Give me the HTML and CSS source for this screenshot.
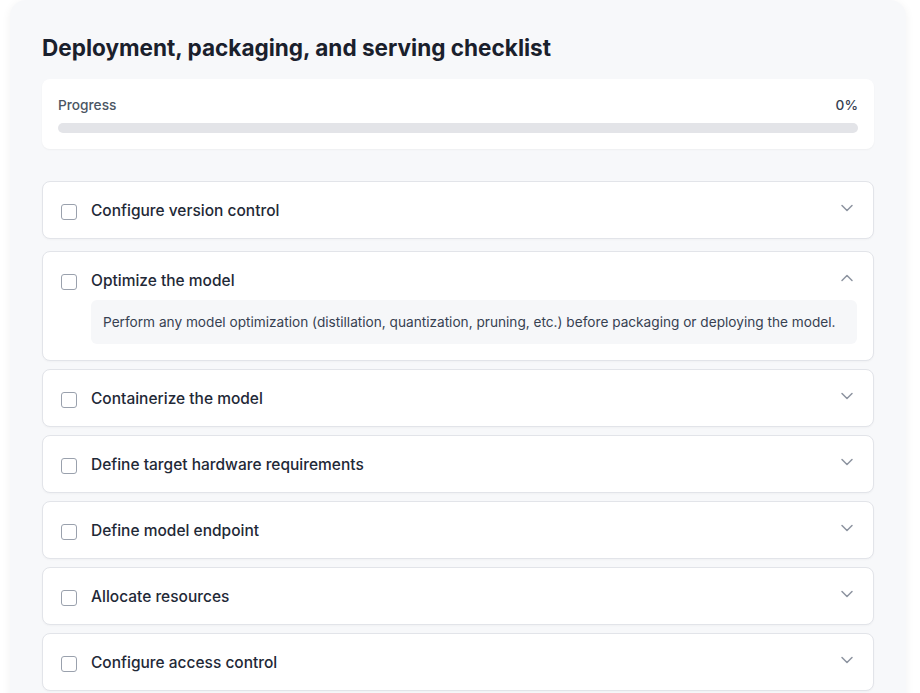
FILE: index.html
```html
<!DOCTYPE html>
<html lang="en">
<head>
<meta charset="utf-8">
<title>Checklist</title>
<link rel="stylesheet" href="styles.css">
</head>
<body>
<div class="panel">
  <h1 class="title">Deployment, packaging, and serving checklist</h1>
  <div class="progress-card">
    <div class="progress-head"><span>Progress</span><span>0%</span></div>
    <div class="progress-track"><div class="progress-fill" style="width:0%"></div></div>
  </div>
  <div class="list">
    <div class="item first">
      <div class="row">
        <span class="box"></span>
        <span class="label">Configure version control</span>
        <svg class="chev" viewBox="0 0 20 20"><path d="M5 7.5l5 5 5-5"/></svg>
      </div>
    </div>
    <div class="item">
      <div class="row">
        <span class="box"></span>
        <span class="label">Optimize the model</span>
        <svg class="chev" viewBox="0 0 20 20"><path d="M5 12.5l5-5 5 5"/></svg>
      </div>
      <div class="desc">Perform any model optimization (distillation, quantization, pruning, etc.) before packaging or deploying the model.</div>
    </div>
    <div class="item">
      <div class="row">
        <span class="box"></span>
        <span class="label">Containerize the model</span>
        <svg class="chev" viewBox="0 0 20 20"><path d="M5 7.5l5 5 5-5"/></svg>
      </div>
    </div>
    <div class="item">
      <div class="row">
        <span class="box"></span>
        <span class="label">Define target hardware requirements</span>
        <svg class="chev" viewBox="0 0 20 20"><path d="M5 7.5l5 5 5-5"/></svg>
      </div>
    </div>
    <div class="item">
      <div class="row">
        <span class="box"></span>
        <span class="label">Define model endpoint</span>
        <svg class="chev" viewBox="0 0 20 20"><path d="M5 7.5l5 5 5-5"/></svg>
      </div>
    </div>
    <div class="item">
      <div class="row">
        <span class="box"></span>
        <span class="label">Allocate resources</span>
        <svg class="chev" viewBox="0 0 20 20"><path d="M5 7.5l5 5 5-5"/></svg>
      </div>
    </div>
    <div class="item">
      <div class="row">
        <span class="box"></span>
        <span class="label">Configure access control</span>
        <svg class="chev" viewBox="0 0 20 20"><path d="M5 7.5l5 5 5-5"/></svg>
      </div>
    </div>
  </div>
</div>
</body>
</html>
```
FILE: styles.css
```css
* { box-sizing: border-box; }
html, body { margin: 0; padding: 0; background: #ffffff; }
body {
  font-family: Inter, "Noto Sans", "Liberation Sans", sans-serif;
  color: #1f2937;
  height: 693px;
  overflow: hidden;
}
.panel {
  width: 896px;
  margin: 0 0 0 10px;
  background: #f7f8fa;
  border-radius: 16px;
  padding: 32px 32px 32px;
  box-shadow: 0 2px 10px rgba(0,0,0,0.06);
}
.title {
  margin: 0 0 15px;
  font-size: 22.55px;
  line-height: 32px;
  font-weight: 700;
  color: #1a202c;
  letter-spacing: 0;
}
.progress-card {
  background: #ffffff;
  border-radius: 8px;
  padding: 16px;
  box-shadow: 0 1px 2px rgba(0,0,0,0.04);
}
.progress-head {
  display: flex;
  justify-content: space-between;
  font-size: 13.7px;
  line-height: 20px;
  font-weight: 500;
  color: #4b5563;
  margin-bottom: 8px;
}
.progress-head span:last-child { color: #374151; }
.progress-track {
  height: 10px;
  border-radius: 5px;
  background: #e3e4e8;
  overflow: hidden;
}
.progress-fill { height: 100%; background: #3b82f6; }
.list {
  margin-top: 32px;
  display: flex;
  flex-direction: column;
  gap: 8px;
}
.item {
  background: #ffffff;
  border: 1px solid #e2e4e9;
  border-radius: 8px;
  padding: 16px 16px 16px 18px;
  box-shadow: 0 1px 2px rgba(0,0,0,0.03);
}
.item.first { margin-bottom: 4px; }
.row {
  display: flex;
  align-items: center;
  height: 24px;
}
.box {
  width: 16px;
  height: 16px;
  border: 1.5px solid #9aa1ad;
  border-radius: 3px;
  background: #fff;
  flex: none;
  margin-top: 3px;
}
.label {
  margin-left: 14px;
  font-size: 15.5px;
  font-weight: 500;
  color: #1f2937;
  flex: 1;
}
.chev {
  width: 20px;
  height: 20px;
  flex: none;
  fill: none;
  stroke: #8d94a0;
  stroke-width: 1.5;
  stroke-linecap: round;
  stroke-linejoin: round;
  margin-top: -4px;
}
.desc {
  margin: 8px 0 0 30px;
  background: #f6f7f9;
  border-radius: 6px;
  padding: 12px;
  font-size: 13.65px;
  line-height: 20px;
  color: #374151;
}
```
